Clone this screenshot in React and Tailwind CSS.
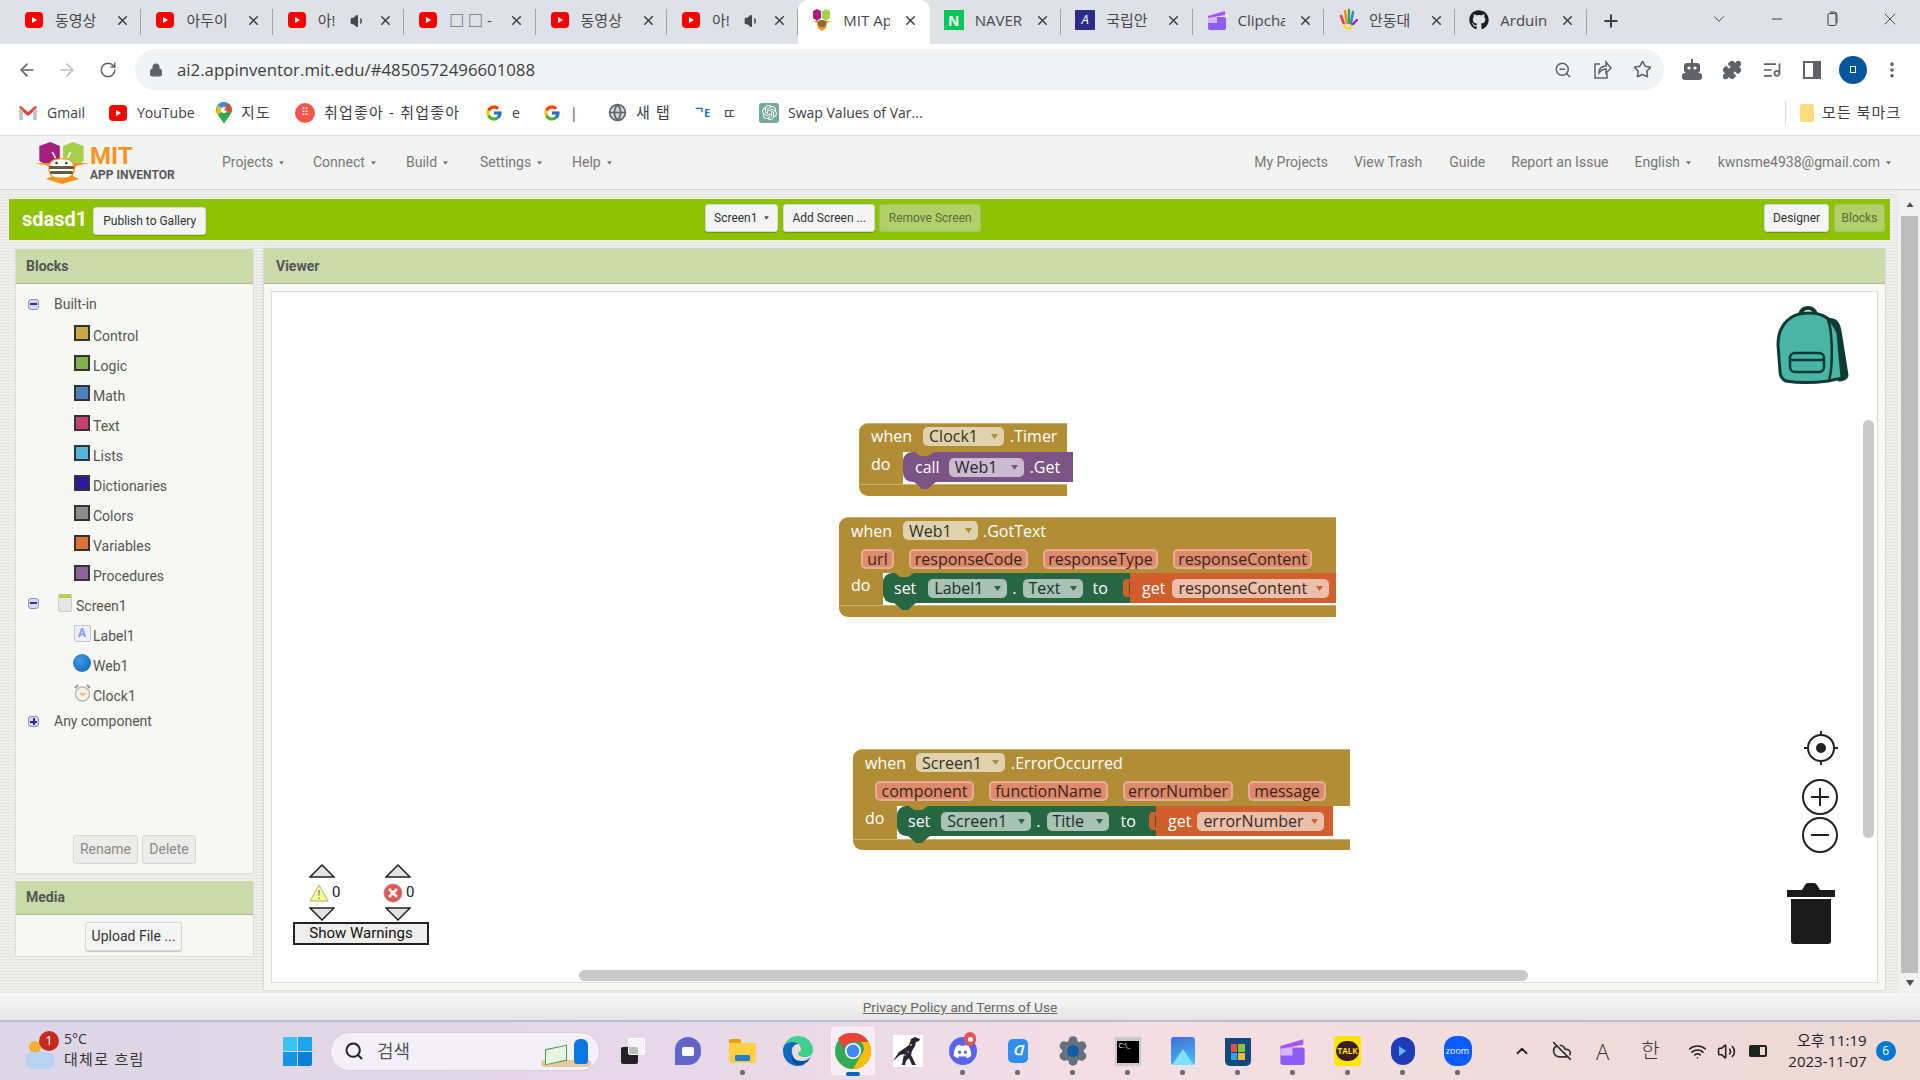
import {
  ArrowLeft, ArrowRight, RotateCw, Lock, ZoomOut, Star, Puzzle, ListMusic, MoreVertical,
  Plus, X, ChevronDown, Minus, Volume1, Search, ChevronUp, Wifi, Volume2, CloudOff, Globe, Settings,
} from "lucide-react";
import { FaGithub, FaDiscord } from "react-icons/fa";
import { FcGoogle } from "react-icons/fc";
import { SiOpenai } from "react-icons/si";

const YouTube = () => (
  <svg width="20" height="16" viewBox="0 0 20 16">
    <rect x="1" y="0" width="18" height="16" rx="4" fill="#f00" />
    <path d="M8 5v6l5-3z" fill="#fff" />
  </svg>
);

const MitIcon = () => (
  <svg width="22" height="24" viewBox="0 0 22 24">
    <path d="M6 1l4 2v7l-4 3-4-3V3z" fill="#a61f7f" />
    <path d="M15 1l4 2v7l-4 3-4-3V3z" fill="#a6cf4a" />
    <path d="M2 13h18l-4 2-1 5-4 3-4-3-1-5z" fill="#f7941e" />
    <rect x="7" y="12" width="8" height="7" rx="3" fill="#8a6d3b" />
  </svg>
);

const Naver = () => (
  <div className="w-[20px] h-[20px] bg-[#03c75a] text-white text-[14px] font-bold flex items-center justify-center">N</div>
);

const Kookmin = () => (
  <div className="w-[20px] h-[20px] bg-[#2a2c86] text-white text-[13px] italic flex items-center justify-center">A</div>
);

const Clipchamp = ({ size = 20 }) => (
  <svg width={size} height={size} viewBox="0 0 20 20">
    <rect x="1" y="7" width="18" height="13" rx="2" fill="#8b5cf6" />
    <rect x="1" y="7" width="9" height="6" fill="#d8b4fe" />
    <path d="M1 6l17-5v4L1 8z" fill="#a855f7" />
  </svg>
);

const Hand = () => (
  <svg width="20" height="24" viewBox="0 0 20 24" fill="none" strokeWidth="2.4" strokeLinecap="round">
    <path d="M3 8l3 8" stroke="#e53935" />
    <path d="M7 3l2 12" stroke="#fb8c00" />
    <path d="M11 2v13" stroke="#43a047" />
    <path d="M15 4l-2 11" stroke="#1e88e5" />
    <path d="M19 12l-5 5" stroke="#8e24aa" />
    <path d="M6 17c2 5 6 5 8 1" stroke="#fdd835" />
  </svg>
);

const MapPin = () => (
  <svg width="16" height="22" viewBox="0 0 16 22">
    <path d="M8 0a8 8 0 0 1 8 8c0 5-6 9-8 14C6 17 0 13 0 8a8 8 0 0 1 8-8z" fill="#34a853" />
    <path d="M2 3l6 5-6 5C0 10 0 6 2 3z" fill="#fbbc04" />
    <path d="M2 3a8 8 0 0 1 6-3l4 4-4 4z" fill="#4285f4" />
    <circle cx="8" cy="8" r="3" fill="#fff" />
    <path d="M12 1a8 8 0 0 1 3 10L8 8z" fill="#ea4335" opacity="0.85" />
  </svg>
);

const GmailM = () => (
  <svg width="20" height="16" viewBox="0 0 20 16">
    <path d="M1 2v13h4V7l5 4 5-4v8h4V2l-2-1-7 6-7-6z" fill="#d9483b" />
    <path d="M1 2v13h4V6z" fill="#c7c7c7" />
    <path d="M19 2v13h-4V6z" fill="#c7c7c7" />
  </svg>
);

const ChromeIcon = () => (
  <svg width="36" height="36" viewBox="0 0 36 36">
    <circle cx="18" cy="18" r="18" fill="#34a853" />
    <path d="M18 0a18 18 0 0 1 15.6 9H18a9 9 0 0 0-8.7 6.7L3 5.6A18 18 0 0 1 18 0z" fill="#ea4335" />
    <path d="M33.6 9A18 18 0 0 1 18 36l7.8-13.5A9 9 0 0 0 26 9z" fill="#fbbc04" />
    <circle cx="18" cy="18" r="8" fill="#fff" />
    <circle cx="18" cy="18" r="6.4" fill="#4285f4" />
  </svg>
);

const EdgeIcon = () => (
  <svg width="30" height="30" viewBox="0 0 30 30">
    <path d="M15 0c8 0 15 6 15 14 0 5-4 7-8 7-5 0-7-2-7-3 0-2 3-2 3-5 0-4-4-7-8-7C5 6 1 9 0 13 1 6 7 0 15 0z" fill="#3fcf8e" />
    <path d="M0 13C1 8 5 6 10 6c2 0 4 .7 5.500 2C11 8 8 12 9 17c1 6 6 11 13 11-2 1-4 2-7 2C6 30 0 23 0 15z" fill="#0c6abf" />
    <path d="M9 17c0 5 4 8 9 8 4 0 8-1 10-5-2 6-7 9-12 9-6 0-8-5-7-12z" fill="#0a4f9a" />
  </svg>
);

const Raptor = () => (
  <svg width="30" height="32" viewBox="0 0 30 32" className="bg-white">
    <path d="M22 2l5 2-1 2-3 1-1 4-3 5-1 4 2 4 3 6h-4l-3-7-3 3-1 4h-3l1-6 1-5-4 1-7 6 6-9 6-4 4-3 2-6z" fill="#2c2530" />
    <circle cx="15" cy="17" r="1" fill="#e0578a" />
    <circle cx="12" cy="20" r="1" fill="#4ea3e0" />
    <circle cx="18" cy="10" r="1" fill="#e8c23a" />
  </svg>
);

const tabs = [
  { icon: <YouTube />, title: "동영상" },
  { icon: <YouTube />, title: "아두이" },
  { icon: <YouTube />, title: "아!", sound: true },
  { icon: <YouTube />, title: "□ □ -" },
  { icon: <YouTube />, title: "동영상" },
  { icon: <YouTube />, title: "아!", sound: true },
  { icon: <MitIcon />, title: "MIT Ap", active: true },
  { icon: <Naver />, title: "NAVER" },
  { icon: <Kookmin />, title: "국립안" },
  { icon: <Clipchamp />, title: "Clipcha" },
  { icon: <Hand />, title: "안동대" },
  { icon: <FaGithub size={20} className="text-[#1b1f23]" />, title: "Arduin" },
];

const Tab = ({ icon, title, sound, active }) => (
  <div className={`relative w-[131.4px] h-full shrink-0 flex items-center pl-[12px] pb-[4px] ${active ? "bg-white rounded-t-[10px]" : ""}`}>
    <div className="w-[24px] flex justify-center shrink-0">{icon}</div>
    <div className="ml-[9px] w-[47px] overflow-hidden whitespace-nowrap text-[15px] text-[#45484c]">
      {title}
      {sound && <Volume1 size={16} className="inline ml-[14px] -mt-[2px] text-[#45484c]" fill="#45484c" />}
    </div>
    <X size={15} strokeWidth={2.4} className="ml-[13px] text-[#3c4043]" />
    {!active && <div className="absolute right-0 top-[9px] h-[26px] w-px bg-[#9ea3a8]" />}
  </div>
);

const bookmarks = [
  { icon: <GmailM />, label: "Gmail", w: "w-[90px]" },
  { icon: <YouTube />, label: "YouTube", w: "w-[108px]" },
  { icon: <MapPin />, label: "지도", w: "w-[79px]", ko: true },
  { icon: <div className="w-[20px] h-[20px] rounded-full bg-[#f9554a] text-white text-[11px] flex items-center justify-center">⠿</div>, label: "취업좋아 - 취업좋아", w: "w-[190px]", ko: true },
  { icon: <FcGoogle size={18} />, label: "e", w: "w-[58px]" },
  { icon: <FcGoogle size={18} />, label: "|", w: "w-[65px]" },
  { icon: <Globe size={19} className="text-[#5f6368]" fill="#d4d6d9" />, label: "새 탭", w: "w-[86px]", ko: true },
  { icon: <div className="w-[20px] text-[11px] font-bold leading-none text-[#1a73c9]">ᄀE</div>, label: "ㄸ", w: "w-[65px]" },
  { icon: <div className="w-[20px] h-[20px] rounded-[3px] bg-[#74aa9c] flex items-center justify-center"><SiOpenai size={15} className="text-white" /></div>, label: "Swap Values of Var...", w: "w-[200px]" },
];

const Caret = ({ className = "" }) => (
  <svg width="7" height="5" viewBox="0 0 7 5" className={`inline-block fill-current ${className}`}>
    <path d="M0 0h7L3.5 5z" />
  </svg>
);

const NavItem = ({ label, caret, className = "" }) => (
  <div className={`flex items-center gap-[6px] text-[14px] text-[#777] ${className}`}>
    {label}
    {caret && <Caret className="text-[#777] w-[5px] h-[4px]" />}
  </div>
);

const AppLogo = () => (
  <div className="flex items-center ml-[35px] w-[187px] shrink-0">
    <svg width="54" height="42" viewBox="0 0 50 42" preserveAspectRatio="none" className="shrink-0">
      <path d="M14 0l9 4v15l-9 6-10-6V4z" fill="#a61f7f" />
      <path d="M35 0l10 4v15l-10 6-9-6V4z" fill="#a6cf4a" />
      <path d="M0 21h13l3-2h17l3 2h14l-12 3-3 10 6 3-16 5-15-5 6-3-3-10z" fill="#f7941e" />
      <rect x="13" y="17" width="23" height="19" rx="8" fill="#fff" stroke="#f7941e" />
      <path d="M13 24h23v3H13zM14 29h21v3H14z" fill="#6b5a3c" />
      <path d="M19 16l-3-6M30 16l3-6" stroke="#fff" strokeWidth="1.5" />
      <circle cx="20" cy="21" r="1.3" fill="#444" />
      <circle cx="29" cy="21" r="1.3" fill="#444" />
    </svg>
    <div className="ml-[1px] flex flex-col">
      <div className="text-[24px] leading-[24px] font-bold text-[#f7941e]">MIT</div>
      <div className="text-[12px] leading-[14px] font-bold text-[#58595b]">APP INVENTOR</div>
    </div>
  </div>
);

const ToolButton = ({ disabled, className = "", children }) => (
  <div className={`h-[28px] flex items-center justify-center gap-[7px] rounded-[3px] border text-[12px] ${disabled ? "bg-[#b1cf6b] border-[#a4c25e] text-[#5e6b3a]" : "bg-[#f5f5f5] border-[#d8d8d8] text-[#333] shadow-[0_1px_1px_rgba(0,0,0,0.2)]"} ${className}`}>
    {children}
  </div>
);

const treeItems = [
  { color: "bg-[#cba747]", label: "Control" },
  { color: "bg-[#83ae51]", label: "Logic" },
  { color: "bg-[#4a81be]", label: "Math" },
  { color: "bg-[#c63f72]", label: "Text" },
  { color: "bg-[#54b6dd]", label: "Lists" },
  { color: "bg-[#2d1899]", label: "Dictionaries" },
  { color: "bg-[#8c8c8c]", label: "Colors" },
  { color: "bg-[#df7336]", label: "Variables" },
  { color: "bg-[#8e6497]", label: "Procedures" },
];

const Toggle = ({ open }) => (
  <div className="w-[11px] h-[11px] rounded-[3px] bg-[#d8daf0] border border-[#8c90c8] flex items-center justify-center relative shrink-0">
    <div className="w-[7px] h-[2px] bg-[#2a2f9c]" />
    {!open && <div className="absolute w-[2px] h-[7px] bg-[#2a2f9c]" />}
  </div>
);

const TreeRow = ({ icon, label }) => (
  <div className="h-[30px] flex items-center pl-[58px]">
    <div className="w-[16px] flex justify-center shrink-0">{icon}</div>
    <span className="ml-[3px] mt-[6px] text-[14px] text-[#555]">{label}</span>
  </div>
);

const Swatch = ({ color }) => <div className={`w-[16px] h-[16px] border-2 border-[#333] ${color}`} />;

const fieldTones = {
  gold: "bg-[#dfd2af] text-[#33311f]",
  purple: "bg-[#cbbbce] text-[#2a1f33]",
  green: "bg-[#a8c2b3] text-[#183027]",
  orange: "bg-[#ecbfab] text-[#3a2a22]",
};
const arrowTones = { gold: "text-[#b18e35]", purple: "text-[#7c5385]", green: "text-[#266643]", orange: "text-[#d05f2d]" };

const Field = ({ w, label, tone }) => (
  <div className={`h-[19px] rounded-[5px] flex items-center justify-between px-[6px] shrink-0 ${w} ${fieldTones[tone]}`}>
    <span>{label}</span>
    <Caret className={arrowTones[tone]} />
  </div>
);

const Param = ({ w, label }) => (
  <div className={`h-[20px] rounded-[5px] flex items-center justify-center shrink-0 bg-[#de8b6c] border-2 border-[#e9ad97] text-[#3a241a] ${w}`}>
    {label}
  </div>
);

const Statement = ({ w, bg, fill, children }) => (
  <div className={`relative h-[30px] shrink-0 flex items-center rounded-l-[9px] text-white ${w} ${bg}`}>
    <svg width="20" height="5" viewBox="0 0 20 5" className="absolute top-0 left-[12px]">
      <path d="M0 0l5 4h8l6-4z" fill="#b18e35" />
    </svg>
    <svg width="22" height="7" viewBox="0 0 22 7" className="absolute top-full left-[11px]">
      <path d="M0 0l5 4 3 3h6l3-3 5-4z" fill={fill} />
    </svg>
    {children}
  </div>
);

const ValueBlock = ({ w, children }) => (
  <div className={`relative h-[30px] shrink-0 flex items-center bg-[#d05f2d] text-white ${w}`}>
    <svg width="9" height="18" viewBox="0 0 9 18" className="absolute -left-[8px] top-[6px]">
      <path d="M9 0H3L1 3v12l2 3h6l-2-4V4z" fill="#d05f2d" />
    </svg>
    {children}
  </div>
);

const Notes = ({ className, children }) => <div className={`flex items-center ${className}`}>{children}</div>;

const Tri = ({ up }) => (
  <svg width="26" height="14" viewBox="0 0 26 14" className="block">
    <path d={up ? "M1 13L13 1l12 12z" : "M1 1l12 12L25 1z"} fill="#e4e4e4" stroke="#222" strokeWidth="1.5" />
  </svg>
);

const WarnColumn = ({ icon, className }) => (
  <div className={`w-[34px] flex flex-col ${className}`}>
    <Tri up />
    <div className="h-[29px] flex items-center gap-[3px] text-[15px] text-[#222]">
      {icon}
      <span>0</span>
    </div>
    <Tri />
  </div>
);

const Canvas = () => (
  <div className="relative w-[1607px] h-[692px] bg-white border border-[#dcdcdc] overflow-hidden font-['Open_Sans',sans-serif] text-[16px]">
    {/* clock block */}
    <div className="absolute left-[587px] top-[131px] w-[208px] text-white">
      <Notes className="h-[29px] bg-[#b18e35] border-t border-[#c9b26e] rounded-tl-[9px] pl-[12px] pb-[4px]">
        <span>when</span>
        <div className="w-[11px]" />
        <Field w="w-[81px]" label="Clock1" tone="gold" />
        <span className="ml-[6px]">.Timer</span>
      </Notes>
      <div className="flex h-[32px]">
        <div className="w-[44px] bg-[#b18e35] pl-[12px] leading-[24px] shrink-0">do</div>
        <Statement w="w-[170px]" bg="bg-[#7c5385]" fill="#7c5385">
          <span className="ml-[12px]">call</span>
          <div className="ml-[9px]"><Field w="w-[75px]" label="Web1" tone="purple" /></div>
          <span className="ml-[6px]">.Get</span>
        </Statement>
      </div>
      <div className="h-[12px] bg-[#b18e35] border-t border-[#c9b26e] rounded-bl-[9px]" />
    </div>

    {/* web gottext block */}
    <div className="absolute left-[567px] top-[225px] w-[497px] text-white">
      <Notes className="h-[30px] bg-[#b18e35] border-t border-[#c9b26e] rounded-tl-[9px] pl-[12px] pb-[4px]">
        <span>when</span>
        <div className="w-[11px]" />
        <Field w="w-[75px]" label="Web1" tone="gold" />
        <span className="ml-[5px]">.GotText</span>
      </Notes>
      <Notes className="h-[26px] bg-[#b18e35] pl-[22px] pb-[3px] gap-[15px]">
        <Param w="w-[33px]" label="url" />
        <Param w="w-[119px]" label="responseCode" />
        <Param w="w-[115px]" label="responseType" />
        <Param w="w-[139px]" label="responseContent" />
      </Notes>
      <div className="flex h-[32px]">
        <div className="w-[44px] bg-[#b18e35] pl-[12px] leading-[24px] shrink-0">do</div>
        <Statement w="w-[247px]" bg="bg-[#266643]" fill="#266643">
          <span className="ml-[11px]">set</span>
          <div className="ml-[12px]"><Field w="w-[79px]" label="Label1" tone="green" /></div>
          <span className="ml-[5px]">.</span>
          <div className="ml-[6px]"><Field w="w-[60px]" label="Text" tone="green" /></div>
          <span className="ml-[10px]">to</span>
        </Statement>
        <ValueBlock w="w-[206px]">
          <span className="ml-[12px]">get</span>
          <div className="ml-[7px]"><Field w="w-[157px]" label="responseContent" tone="orange" /></div>
        </ValueBlock>
      </div>
      <div className="h-[12px] bg-[#b18e35] border-t border-[#c9b26e] rounded-bl-[9px]" />
    </div>

    {/* screen error block */}
    <div className="absolute left-[581px] top-[457px] w-[497px] text-white">
      <Notes className="h-[29px] bg-[#b18e35] border-t border-[#c9b26e] rounded-tl-[9px] pl-[12px] pb-[3px]">
        <span>when</span>
        <div className="w-[10px]" />
        <Field w="w-[89px]" label="Screen1" tone="gold" />
        <span className="ml-[6px]">.ErrorOccurred</span>
      </Notes>
      <Notes className="h-[28px] bg-[#b18e35] pl-[22px] pb-[3px] gap-[15px]">
        <Param w="w-[99px]" label="component" />
        <Param w="w-[119px]" label="functionName" />
        <Param w="w-[110px]" label="errorNumber" />
        <Param w="w-[78px]" label="message" />
      </Notes>
      <div className="flex h-[33px]">
        <div className="w-[44px] bg-[#b18e35] pl-[12px] leading-[24px] shrink-0">do</div>
        <Statement w="w-[259px]" bg="bg-[#266643]" fill="#266643">
          <span className="ml-[11px]">set</span>
          <div className="ml-[11px]"><Field w="w-[90px]" label="Screen1" tone="green" /></div>
          <span className="ml-[5px]">.</span>
          <div className="ml-[6px]"><Field w="w-[62px]" label="Title" tone="green" /></div>
          <span className="ml-[12px]">to</span>
        </Statement>
        <ValueBlock w="w-[177px]">
          <span className="ml-[12px]">get</span>
          <div className="ml-[6px]"><Field w="w-[127px]" label="errorNumber" tone="orange" /></div>
        </ValueBlock>
      </div>
      <div className="h-[11px] bg-[#b18e35] border-t border-[#c9b26e] rounded-bl-[9px]" />
    </div>

    {/* warning counter */}
    <div className="absolute left-[21px] top-[572px] w-[136px] font-['Roboto',sans-serif]">
      <div className="flex items-start h-[58px]">
        <WarnColumn className="ml-[16px]" icon={
          <svg width="20" height="18" viewBox="0 0 20 18"><path d="M10 1l9 16H1z" fill="#fbfb9a" stroke="#b0b070" /><path d="M9.300 6h1.400l-.3 6h-.8zM9.300 13.500h1.400V15H9.300z" fill="#777" /></svg>
        } />
        <WarnColumn className="ml-[42px]" icon={
          <svg width="20" height="20" viewBox="0 0 20 20" className="-ml-[2px]"><circle cx="10" cy="10" r="9" fill="#ef5350" stroke="#999" /><path d="M6 6l8 8M14 6l-8 8" stroke="#fff" strokeWidth="2.6" /></svg>
        } />
      </div>
      <div className="h-[23px] w-[136px] bg-[#eee] border-2 border-[#222] flex items-center justify-center text-[15px] text-[#111]">Show Warnings</div>
    </div>

    {/* backpack */}
    <svg width="76" height="80" viewBox="0 0 76 80" className="absolute left-[1503px] top-[13px]">
      <path d="M25 9c3-8 13-8 16 0" fill="none" stroke="#0d3b33" strokeWidth="4" />
      <path d="M50 14c10 0 13 2 15 12l7 44c0 3-4 5-9 5" fill="#0d3b33" stroke="#0d3b33" strokeWidth="3" />
      <path d="M59 28l5 42h-5z" fill="#fff" />
      <path d="M3 40C3 18 17 8 33 8s24 6 30 20l4 45-14 3c-15 2-30 2-42 0-5-2-6-6-6-10z" fill="#4bb5a5" stroke="#0d3b33" strokeWidth="3" />
      <path d="M52 13c6 10 6 50 2 62" fill="none" stroke="#0d3b33" strokeWidth="2.500" />
      <rect x="15" y="48" width="34" height="19" rx="5" fill="#4bb5a5" stroke="#0d3b33" strokeWidth="2.500" />
      <path d="M15 55h34" stroke="#0d3b33" strokeWidth="2.500" />
    </svg>

    {/* workspace controls */}
    <svg width="34" height="34" viewBox="0 0 34 34" className="absolute left-[1532px] top-[439px]">
      <circle cx="17" cy="17" r="13" fill="none" stroke="#222" strokeWidth="2" />
      <circle cx="17" cy="17" r="5" fill="#222" />
      <path d="M17 0v5M17 29v5M0 17h5M29 17h5" stroke="#222" strokeWidth="2" />
    </svg>
    <svg width="38" height="38" viewBox="0 0 38 38" className="absolute left-[1529px] top-[486px]">
      <circle cx="19" cy="19" r="17" fill="#fff" stroke="#222" strokeWidth="2" />
      <path d="M19 10v18M10 19h18" stroke="#222" strokeWidth="2" />
    </svg>
    <svg width="38" height="38" viewBox="0 0 38 38" className="absolute left-[1529px] top-[524px]">
      <circle cx="19" cy="19" r="17" fill="#fff" stroke="#222" strokeWidth="2" />
      <path d="M10 19h18" stroke="#222" strokeWidth="2" />
    </svg>
    <svg width="48" height="62" viewBox="0 0 48 62" className="absolute left-[1515px] top-[591px]">
      <path d="M0 7h15l3-5q1-2 3-2h6q2 0 3 2l3 5h15v7H0z" fill="#1a1a1a" />
      <path d="M4 16h40v42q0 3-3 3H7q-3 0-3-3z" fill="#1a1a1a" />
    </svg>

    {/* workspace scrollbars */}
    <div className="absolute left-[1591px] top-[128px] w-[11px] h-[418px] rounded-full bg-[#c9c9c9]" />
    <div className="absolute left-[307px] top-[678px] w-[949px] h-[11px] rounded-full bg-[#c9c9c9]" />
  </div>
);

const WinLogo = () => (
  <div className="grid grid-cols-2 gap-[1px] w-[29px] h-[29px]">
    <div className="bg-[#39c4f5] rounded-tl-[2px]" />
    <div className="bg-[#1ca5ec]" />
    <div className="bg-[#1594e4]" />
    <div className="bg-[#0b7ed6] rounded-br-[2px]" />
  </div>
);

const taskIcons = [
  { dot: false, el: <div className="relative w-[24px] h-[26px]"><div className="absolute left-0 bottom-0 w-[17px] h-[17px] rounded-[2px] bg-[#222]" /><div className="absolute right-0 top-0 w-[17px] h-[17px] rounded-[2px] bg-white/70 border border-white" /></div> },
  { dot: false, el: <div className="w-[26px] h-[28px] rounded-full rounded-bl-[4px] bg-[#6264c7] flex items-center justify-center"><div className="w-[12px] h-[9px] rounded-[2px] bg-white" /></div> },
  { dot: true, el: <div className="w-[27px] h-[24px] flex flex-col"><div className="w-[12px] h-[4px] rounded-t-[2px] bg-[#e2a500]" /><div className="flex-1 rounded-b-[2px] bg-[#ffd043] flex items-end justify-center"><div className="w-[15px] h-[6px] mb-[2px] rounded-[1px] bg-[#1f7fd1]" /></div></div> },
  { dot: false, el: <EdgeIcon /> },
  { dot: false, active: true, el: <ChromeIcon /> },
  { dot: false, el: <Raptor /> },
  { dot: true, badge: true, el: <div className="w-[28px] h-[28px] rounded-full bg-[#5865f2] flex items-center justify-center"><FaDiscord size={19} className="text-white" /></div> },
  { dot: true, el: <div className="w-[20px] h-[24px] rounded-[5px] bg-[#2f8ff0] text-white text-[13px] font-bold flex items-center justify-center italic">ᗡ</div> },
  { dot: true, el: <div className="relative flex items-center justify-center"><Settings size={32} fill="#67717b" className="text-[#67717b]" /><div className="absolute w-[12px] h-[12px] rounded-full bg-[#0d5fa8]" /></div> },
  { dot: true, el: <div className="w-[26px] h-[28px] bg-[#c9c9c9] p-[2px] pt-[4px] shadow"><div className="w-full h-full bg-black text-white text-[7px] leading-[9px] pl-[2px]">C:\_</div></div> },
  { dot: true, el: <div className="w-[24px] h-[28px] rounded-[3px] bg-[linear-gradient(160deg,#3f6fd8,#46c0ef)] flex items-end justify-center overflow-hidden"><div className="w-0 h-0 border-x-[11px] border-x-transparent border-b-[16px] border-b-[#7fe0ff]" /></div> },
  { dot: true, el: <div className="w-[26px] h-[28px] rounded-b-[5px] bg-[#13497f] mt-[2px] grid grid-cols-2 gap-[1px] p-[6px]"><div className="bg-[#e5533d]" /><div className="bg-[#8ac23f]" /><div className="bg-[#2ca4e6]" /><div className="bg-[#f6b92b]" /></div> },
  { dot: true, el: <Clipchamp size={27} /> },
  { dot: true, el: <div className="w-[27px] h-[30px] rounded-[4px] bg-[#ffe500] flex items-center justify-center"><div className="w-[23px] h-[20px] rounded-full bg-[#3b1e1e] text-[#ffe500] text-[8px] font-bold flex items-center justify-center">TALK</div></div> },
  { dot: true, el: <div className="w-[24px] h-[28px] rounded-full bg-[#1f3bb5] flex items-center justify-center"><div className="w-0 h-0 border-y-[5px] border-y-transparent border-l-[7px] border-l-[#5cb7ff]" /></div> },
  { dot: true, el: <div className="w-[28px] h-[30px] rounded-[12px] bg-[#0b5cff] text-white text-[9px] flex items-center justify-center">zoom</div> },
];

const TaskIcon = ({ el, dot, active, badge }) => (
  <div className="relative w-[55px] h-[60px] shrink-0 flex items-center justify-center">
    {active && <div className="absolute left-[6px] top-[6px] w-[44px] h-[48px] rounded-[4px] bg-white/50 border border-white/60" />}
    <div className="relative">{el}</div>
    {badge && <div className="absolute left-[29px] top-[11px] w-[12px] h-[14px] rounded-full bg-[#e8535a] border-[3px] border-[#e8535a] flex items-center justify-center"><div className="w-[5px] h-[5px] rounded-full bg-white" /></div>}
    {dot && <div className="absolute bottom-[6px] w-[5px] h-[5px] rounded-[2px] bg-[#6d6d6d]" />}
    {active && <div className="absolute bottom-[5px] w-[14px] h-[4px] rounded-full bg-[#0067c0]" />}
  </div>
);

const App = () => {
  return (
    <div className="w-[1920px] h-[1080px] overflow-hidden bg-white font-['Roboto','Noto_Sans_CJK_KR',sans-serif] flex flex-col">
      {/* tab strip */}
      <div className="h-[44px] bg-[#dee1e6] flex pl-[10px] shrink-0 font-['Open_Sans','Noto_Sans_CJK_KR',sans-serif]">
        {tabs.map((t, i) => (
          <Tab key={i} {...t} />
        ))}
        <Plus size={20} strokeWidth={2.4} className="ml-[14px] mt-[11px] text-[#3c4043]" />
        <ChevronDown size={18} strokeWidth={1.3} className="ml-[89px] mt-[10px] text-[#3c4043]" />
        <Minus size={16} strokeWidth={1.5} className="ml-[41px] mt-[11px] text-[#3c4043]" />
        <svg width="14" height="16" viewBox="0 0 14 16" className="ml-[41px] mt-[11px] text-[#3c4043]" fill="none" stroke="currentColor">
          <rect x="2" y="2.500" width="8" height="12" rx="1.500" />
          <path d="M4 1h4a3 3 0 0 1 3 3v8" />
        </svg>
        <X size={20} strokeWidth={1.1} className="ml-[40px] mt-[9px] text-[#3c4043]" />
      </div>

      {/* address bar */}
      <div className="h-[46px] pt-[5px] bg-white flex items-center shrink-0 font-['Open_Sans',sans-serif]">
        <ArrowLeft size={20} className="ml-[17px] text-[#5f6368]" />
        <ArrowRight size={20} className="ml-[20px] text-[#bdc1c6]" />
        <RotateCw size={18} className="ml-[22px] text-[#5f6368]" />
        <div className="ml-[18px] w-[1529px] h-[41px] rounded-full bg-[#f1f3f4] flex items-center">
          <Lock size={14} fill="#5f6368" className="ml-[14px] text-[#5f6368]" />
          <span className="ml-[14px] text-[16.8px] text-[#3c4043]">ai2.appinventor.mit.edu/#4850572496601088</span>
          <ZoomOut size={18} className="ml-auto text-[#5f6368]" />
          <svg width="20" height="20" viewBox="0 0 20 20" fill="none" stroke="#5f6368" strokeWidth="1.5" className="ml-[20px]">
            <path d="M8 4H3v14h12v-5" />
            <path d="M7 13c0-5 3-7 7-7V2l5 6-5 5V9c-3 0-5 1-7 4z" />
          </svg>
          <Star size={19} className="ml-[21px] mr-[12px] text-[#5f6368]" />
        </div>
        <svg width="20" height="22" viewBox="0 0 20 22" className="ml-[18px]">
          <path d="M9 0h2v4H9z" fill="#5f6368" />
          <rect x="2" y="4" width="16" height="10" rx="3" fill="#5f6368" />
          <rect x="0" y="14" width="20" height="7" rx="3" fill="#5f6368" />
          <circle cx="7" cy="9" r="1.600" fill="#fff" />
          <circle cx="13" cy="9" r="1.600" fill="#fff" />
        </svg>
        <Puzzle size={20} fill="#5f6368" className="ml-[20px] text-[#5f6368]" />
        <ListMusic size={20} className="ml-[20px] text-[#5f6368]" />
        <div className="ml-[21px] w-[18px] h-[18px] border-2 border-[#5f6368] border-r-[8px]" />
        <div className="ml-[18px] w-[28px] h-[28px] rounded-full bg-[#05559d] flex items-center justify-center">
          <div className="w-[6px] h-[7px] border border-white" />
        </div>
        <MoreVertical size={20} strokeWidth={2.4} className="ml-[15px] text-[#5f6368]" />
      </div>

      {/* bookmarks bar */}
      <div className="h-[46px] bg-white flex items-center pl-[18px] pr-[19px] border-b border-[#dadce0] shrink-0 font-['Open_Sans','Noto_Sans_CJK_KR',sans-serif] text-[14px] text-[#3c4043]">
        {bookmarks.map((b, i) => (
          <div key={i} className={`flex items-center gap-[9px] shrink-0 whitespace-nowrap ${b.w}`}>
            {b.icon}
            <span className={b.ko ? "text-[15px] tracking-[1.2px]" : ""}>{b.label}</span>
          </div>
        ))}
        <div className="ml-auto w-px h-[24px] bg-[#dadce0]" />
        <div className="ml-[14px] w-[14px] h-[18px] rounded-[2px] bg-[#fddc7d]" />
        <span className="ml-[8px] text-[15px] tracking-[1px] whitespace-nowrap">모든 북마크</span>
      </div>

      {/* app header */}
      <div className="h-[54px] bg-[#f3f3f3] border-b border-[#d6d6d6] flex items-center shrink-0">
        <AppLogo />
        <NavItem label="Projects" caret className="w-[91px]" />
        <NavItem label="Connect" caret className="w-[93px]" />
        <NavItem label="Build" caret className="w-[74px]" />
        <NavItem label="Settings" caret className="w-[92px]" />
        <NavItem label="Help" caret />
        <NavItem label="My Projects" className="ml-auto" />
        <NavItem label="View Trash" className="ml-[26px]" />
        <NavItem label="Guide" className="ml-[27px]" />
        <NavItem label="Report an Issue" className="ml-[26px]" />
        <NavItem label="English" caret className="ml-[26px]" />
        <NavItem label="kwnsme4938@gmail.com" caret className="ml-[27px] mr-[29px]" />
      </div>

      {/* page body */}
      <div className="h-[803px] flex shrink-0 overflow-hidden">
        <div className="flex-1 pt-[9px] bg-[#ebebe9] bg-[repeating-linear-gradient(0deg,#e4e4e2_0px,#e4e4e2_1px,#efefed_1px,#efefed_3px)]">
          <div className="ml-[9px] w-[1881px] h-[41px] bg-[#8fc202] flex items-center">
            <span className="ml-[13px] -mt-[2px] text-[20px] font-bold text-white">sdasd1</span>
            <ToolButton className="ml-[6px] mt-[2px] w-[113px]">Publish to Gallery</ToolButton>
            <ToolButton className="ml-[499px] mb-[3px] w-[73px]">Screen1 <Caret className="w-[5px] h-[4px] text-[#555]" /></ToolButton>
            <ToolButton className="ml-[5px] mb-[3px] w-[92px]">Add Screen ...</ToolButton>
            <ToolButton disabled className="ml-[4px] mb-[3px] w-[102px]">Remove Screen</ToolButton>
            <ToolButton className="ml-auto mb-[3px] w-[65px]">Designer</ToolButton>
            <ToolButton disabled className="ml-[5px] mb-[3px] w-[51px] mr-[5px]">Blocks</ToolButton>
          </div>

          <div className="flex mt-[9px]">
            {/* left column */}
            <div className="ml-[15px] w-[239px] shrink-0 flex flex-col gap-[7px]">
              <div className="h-[625px] bg-[#f7f8f3] border-x border-b border-[#dcdcd8] flex flex-col">
                <div className="h-[35px] bg-[#ccdaa9] border-b border-[#aeb79a] flex items-center pl-[10px] text-[14px] font-bold text-[#555] shrink-0">Blocks</div>
                <div className="pt-[6px]">
                  <div className="h-[28px] flex items-center pl-[12px]">
                    <Toggle open />
                    <span className="ml-[15px] text-[14px] text-[#555]">Built-in</span>
                  </div>
                  {treeItems.map((it) => (
                    <TreeRow key={it.label} icon={<Swatch color={it.color} />} label={it.label} />
                  ))}
                  <div className="h-[30px] flex items-center pl-[12px]">
                    <Toggle open />
                    <div className="ml-[19px] w-[14px] h-[18px] rounded-[2px] bg-[#e6e6e6] border border-[#ccc] border-t-[4px] border-t-[#b5cc5a]" />
                    <span className="ml-[4px] mt-[6px] text-[14px] text-[#555]">Screen1</span>
                  </div>
                  <TreeRow label="Label1" icon={<div className="w-[17px] h-[17px] shrink-0 rounded-[2px] bg-[#eef0f7] border border-[#c4c6d0] text-[12px] leading-[14px] font-bold text-center text-[#7f9fdc]">A</div>} />
                  <TreeRow label="Web1" icon={<div className="w-[18px] h-[18px] shrink-0 rounded-full bg-[radial-gradient(circle_at_35%_35%,#3c9be0,#0c62b5)]" />} />
                  <TreeRow label="Clock1" icon={
                    <svg width="17" height="18" viewBox="0 0 17 18" className="shrink-0">
                      <path d="M1 4l3-3M16 4l-3-3" stroke="#999" strokeWidth="2" />
                      <circle cx="8.500" cy="10" r="7" fill="#f5f2e8" stroke="#bbb" strokeWidth="1.500" />
                      <path d="M8.500 11l3-2M8.500 11l-2-2" stroke="#f0a93a" strokeWidth="1.500" />
                    </svg>
                  } />
                  <div className="h-[27px] flex items-center pl-[12px]">
                    <Toggle />
                    <span className="ml-[15px] text-[14px] text-[#555]">Any component</span>
                  </div>
                </div>
                <div className="mt-auto mb-[9px] flex justify-start ml-[57px] gap-[4px]">
                  <div className="w-[65px] h-[29px] rounded-[3px] bg-[#ececea] border border-[#d8d8d8] text-[14px] text-[#8a8a8a] flex items-center justify-center">Rename</div>
                  <div className="w-[54px] h-[29px] rounded-[3px] bg-[#ececea] border border-[#d8d8d8] text-[14px] text-[#8a8a8a] flex items-center justify-center">Delete</div>
                </div>
              </div>
              <div className="h-[76px] bg-[#f7f8f3] border-x border-b border-[#dcdcd8]">
                <div className="h-[34px] bg-[#ccdaa9] border-b border-[#aeb79a] flex items-center pl-[10px] text-[14px] font-bold text-[#555]">Media</div>
                <div className="pt-[7px] pl-[69px]">
                  <div className="w-[97px] h-[29px] rounded-[3px] bg-[#f5f5f5] border border-[#d8d8d8] shadow-[0_1px_1px_rgba(0,0,0,0.2)] text-[14px] text-[#333] flex items-center justify-center">Upload File ...</div>
                </div>
              </div>
            </div>

            {/* viewer */}
            <div className="ml-[10px] w-[1621px] h-[741px] bg-[#f7f8f3] shadow-[0_0_2px_rgba(0,0,0,0.25)]">
              <div className="h-[35px] bg-[#ccdaa9] border-b border-[#aeb79a] flex items-center pl-[12px] text-[14px] font-bold text-[#555]">Viewer</div>
              <div className="px-[7px] pt-[7px]">
                <Canvas />
              </div>
            </div>
          </div>
        </div>

        {/* page scrollbar */}
        <div className="w-[22px] shrink-0 bg-[#f1f1f1] pl-[3px] pr-[2px] flex flex-col items-stretch">
          <Caret className="mt-[12px] w-[14px] h-[5px] mx-auto rotate-180 text-[#505050]" />
          <div className="mt-[9px] flex-1 bg-[#bdbdbd]" />
          <Caret className="my-[7px] w-[14px] h-[6px] mx-auto text-[#505050]" />
        </div>
      </div>

      {/* footer */}
      <div className="h-[27px] pt-[2px] bg-[linear-gradient(#f8f8f8,#e6e6e6)] flex items-center justify-center shrink-0 text-[13.7px] text-[#666] underline">
        Privacy Policy and Terms of Use
      </div>

      {/* windows taskbar */}
      <div className="h-[60px] border-t-2 border-[#b9bddb] bg-[linear-gradient(90deg,#dcd6e6,#e6d8e8_35%,#f5dfe5_60%,#ecd8d3)] flex items-center shrink-0 font-['Open_Sans','Noto_Sans_CJK_KR',sans-serif]">
        <div className="relative ml-[25px] w-[34px] h-[40px] shrink-0">
          <div className="absolute left-[4px] top-[10px] w-[12px] h-[12px] rounded-full bg-[#f3b02d]" />
          <div className="absolute left-0 bottom-[2px] w-[30px] h-[17px] rounded-full bg-[#b7d3f1]" />
          <div className="absolute left-[14px] top-0 w-[20px] h-[20px] rounded-full bg-[#c42b1c] text-white text-[13px] flex items-center justify-center">1</div>
        </div>
        <div className="ml-[5px] -mt-[4px] w-[100px] flex flex-col text-[14px] leading-[20px] text-[#333] shrink-0">
          <span>5°C</span>
          <span className="whitespace-nowrap text-[15px] tracking-[1.3px]">대체로 흐림</span>
        </div>
        <div className="ml-[119px] shrink-0"><WinLogo /></div>
        <div className="ml-[18px] w-[270px] h-[39px] rounded-full bg-[#f3f0f7] border border-[#d5d0dc] flex items-center shrink-0">
          <Search size={20} strokeWidth={2.4} className="ml-[13px] text-[#222]" />
          <span className="ml-[13px] text-[18px] text-[#555]">검색</span>
          <div className="ml-auto mr-[8px] relative w-[50px] h-[32px]">
            <div className="absolute left-0 bottom-0 w-[50px] h-[7px] rounded-full bg-[#e8c99b]" />
            <div className="absolute left-[4px] bottom-[4px] w-[22px] h-[16px] bg-[#e8f5e0] border border-[#3f9c5a] skew-y-[-12deg]" />
            <div className="absolute right-[3px] bottom-[3px] w-[14px] h-[25px] rounded-t-[6px] rounded-b-[3px] bg-[#0a78e0]" />
          </div>
        </div>
        <div className="ml-[5px] flex shrink-0">
          {taskIcons.map((t, i) => (
            <TaskIcon key={i} {...t} />
          ))}
        </div>
        <ChevronUp size={18} strokeWidth={2.4} className="ml-[28px] shrink-0 text-[#222]" />
        <CloudOff size={20} className="ml-[21px] shrink-0 text-[#333]" />
        <span className="ml-[24px] text-[22px] font-light text-[#333]">A</span>
        <span className="ml-[32px] text-[20px] font-light text-[#333]">한</span>
        <Wifi size={19} className="ml-[28px] shrink-0 text-[#222]" />
        <Volume2 size={19} className="ml-[10px] shrink-0 text-[#222]" />
        <div className="ml-[13px] w-[18px] h-[12px] border-2 border-[#222] rounded-[2px] flex shrink-0">
          <div className="w-[9px] bg-[#222]" />
        </div>
        <div className="ml-[5px] w-[95px] flex flex-col items-end text-[15px] leading-[21px] text-[#222] whitespace-nowrap shrink-0">
          <span>오후 11:19</span>
          <span>2023-11-07</span>
        </div>
        <div className="ml-[9px] w-[20px] h-[20px] rounded-full bg-[#0078d4] text-white text-[12px] flex items-center justify-center shrink-0">6</div>
      </div>
    </div>
  );
};

export default App;
